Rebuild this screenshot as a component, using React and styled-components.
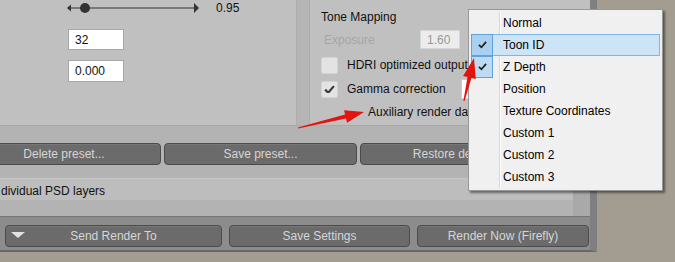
import React from 'react'
import styled, { createGlobalStyle } from 'styled-components'

const GlobalStyle = createGlobalStyle`
  html, body { margin: 0; padding: 0; }
  body {
    background: #a39c90;
    font-family: "Liberation Sans", Arial, sans-serif;
    font-size: 12px;
    overflow: hidden;
  }
`

const Page = styled.div`
  position: relative;
  width: 675px;
  height: 262px;
  overflow: hidden;
  background: #a39c90;
`

const Panel = styled.div`
  box-sizing: border-box;
  width: 597px;
  height: 252px;
  display: flex;
  flex-direction: column;
  background: #b3b3b3;
  border-right: 7px solid #7f7f7f;
  border-bottom: 2px solid #686868;
  overflow: hidden;
`

const TopArea = styled.div`
  display: grid;
  grid-template-columns: 296px 14px 1fr;
  height: 126px;
  flex: none;
  box-sizing: border-box;
  background: #c0c0c0;
  border-bottom: 1px solid #a9a9a9;
`

const LeftCol = styled.div`
  display: flex;
  flex-direction: column;
  align-items: flex-start;
  padding-left: 66px;
  color: #111;
`

const SliderRow = styled.div`
  display: flex;
  align-items: center;
  height: 16px;
`

const SliderValue = styled.span`
  margin-left: 14px;
`

const NumField = styled.div`
  box-sizing: border-box;
  width: 56px;
  height: ${p => p.$h}px;
  margin: ${p => p.$top}px 0 0 2px;
  padding-left: 6px;
  display: flex;
  align-items: center;
  background: #fff;
  border: 1px solid #a8a8a8;
`

const Divider = styled.div`
  background: #b5b5b5;
  border-left: 1px solid #acacac;
  border-right: 1px solid #acacac;
`

const RightCol = styled.div`
  display: flex;
  flex-direction: column;
  padding: 10px 0 0 11px;
  color: #111;
  white-space: nowrap;
  overflow: hidden;
`

const Title = styled.div`
  line-height: 14px;
`

const ExposureRow = styled.div`
  display: flex;
  align-items: center;
  height: 19px;
  margin-top: 6px;
`

const DimLabel = styled.span`
  width: 96px;
  margin-left: 3px;
  color: #a6a6a6;
`

const ExposureField = styled.div`
  box-sizing: border-box;
  width: 40px;
  height: 19px;
  padding-left: 6px;
  display: flex;
  align-items: center;
  background: #ececec;
  border: 1px solid #d6d6d6;
  color: #999;
`

const CheckRow = styled.div`
  display: flex;
  align-items: center;
  height: 18px;
  margin-top: ${p => p.$top}px;
`

const CheckBox = styled.div`
  box-sizing: border-box;
  width: 17px;
  height: 17px;
  margin-right: 9px;
  display: flex;
  align-items: center;
  justify-content: center;
  background: #e3e3e3;
  border: 1px solid #d3d3d3;
  border-radius: 2px;
`

const CheckText = styled.span`
  width: ${p => (p.$w ? `${p.$w}px` : 'auto')};
`

const SelectBox = styled.div`
  box-sizing: border-box;
  width: 40px;
  height: 20px;
  background: #fff;
  border: 1px solid #cfcfcf;
`

const AuxRow = styled.div`
  margin-top: 7px;
  padding-left: 47px;
  line-height: 14px;
`

const Middle = styled.div`
  display: flex;
  flex: 1;
  min-height: 0;
`

const MiddleBody = styled.div`
  flex: 1;
  min-width: 0;
  display: flex;
  flex-direction: column;
  padding-top: 17px;
  overflow: hidden;
`

const Gutter = styled.div`
  width: 17px;
  background: #a9a9a9;
`

const PresetRow = styled.div`
  display: flex;
  gap: 3px;
  margin-left: -33px;
`

const Button = styled.div`
  position: relative;
  box-sizing: border-box;
  flex: none;
  width: ${p => p.$w}px;
  height: 22px;
  display: flex;
  align-items: center;
  justify-content: center;
  background: #6b6b6b;
  border: 1px solid #4b4b4b;
  border-radius: 4px;
  box-shadow: inset 0 1px 0 #777;
  color: #d6d6d6;
  white-space: nowrap;
`

const DropArrow = styled.span`
  position: absolute;
  left: 5px;
  top: 6px;
  width: 0;
  height: 0;
  border-left: 7px solid transparent;
  border-right: 7px solid transparent;
  border-top: 6px solid #e2e2e2;
`

const Band = styled.div`
  box-sizing: border-box;
  height: 22px;
  margin-top: 13px;
  padding: 2px 0 0 1px;
  display: flex;
  align-items: center;
  background: #bdbdbd;
  border-top: 1px solid #c5c5c5;
  color: #111;
  white-space: nowrap;
`

const BottomBar = styled.div`
  box-sizing: border-box;
  height: 34px;
  flex: none;
  display: flex;
  gap: 7px;
  padding: 8px 0 0 5px;
  background: #8c8c8c;
  border-top: 1px solid #767676;
`

const Menu = styled.div`
  position: absolute;
  left: 468px;
  top: 9px;
  width: 195px;
  box-sizing: border-box;
  padding: 2px;
  background: #f0f0f0;
  border: 1px solid #979797;
  box-shadow: 2px 2px 2px rgba(0, 0, 0, 0.45);
  color: #000;
  &::before {
    content: '';
    position: absolute;
    left: 30px;
    top: 2px;
    bottom: 2px;
    width: 1px;
    background: #d7d7d7;
    box-shadow: 1px 0 0 #fff;
  }
`

const Item = styled.div`
  position: relative;
  display: grid;
  grid-template-columns: 22px 1fr;
  align-items: center;
  height: 22px;
  background: ${p => (p.$active ? '#cde4f7' : 'transparent')};
  box-shadow: ${p => (p.$active ? 'inset 0 0 0 1px #7fb6e8' : 'none')};
`

const CheckCell = styled.div`
  box-sizing: border-box;
  height: 22px;
  display: flex;
  align-items: center;
  justify-content: center;
  background: ${p => (p.$on ? (p.$active ? '#a9d0f1' : '#bddcf4') : 'transparent')};
  border: 1px solid ${p => (p.$on ? '#5fa2de' : 'transparent')};
`

const ItemLabel = styled.span`
  padding-left: 10px;
`

const Overlay = styled.svg`
  position: absolute;
  left: 0;
  top: 0;
  pointer-events: none;
`

const Tick = ({ size = 10, color = '#222' }) => (
  <svg width={size} height={size * 0.8} viewBox="0 0 10 8">
    <path d="M1 4.2 L3.8 7 L9 1" fill="none" stroke={color} strokeWidth="2" />
  </svg>
)

function arrowPoints([x1, y1], [x2, y2], headLen, headW, neckW) {
  const len = Math.hypot(x2 - x1, y2 - y1)
  const ux = (x2 - x1) / len
  const uy = (y2 - y1) / len
  const nx = -uy
  const ny = ux
  const bx = x2 - ux * headLen
  const by = y2 - uy * headLen
  const pts = [
    [x1 + nx * 0.6, y1 + ny * 0.6],
    [bx + nx * neckW / 2, by + ny * neckW / 2],
    [bx + nx * headW / 2, by + ny * headW / 2],
    [x2, y2],
    [bx - nx * headW / 2, by - ny * headW / 2],
    [bx - nx * neckW / 2, by - ny * neckW / 2],
    [x1 - nx * 0.6, y1 - ny * 0.6],
  ]
  return pts.map(p => p.map(v => v.toFixed(1)).join(',')).join(' ')
}

const menuItems = [
  { label: 'Normal' },
  { label: 'Toon ID', on: true, active: true },
  { label: 'Z Depth', on: true },
  { label: 'Position' },
  { label: 'Texture Coordinates' },
  { label: 'Custom 1' },
  { label: 'Custom 2' },
  { label: 'Custom 3' },
]

export default function App() {
  return (
    <Page>
      <GlobalStyle />
      <Panel>
        <TopArea>
          <LeftCol>
            <SliderRow>
              <svg width="136" height="16" viewBox="0 0 136 16">
                <polygon points="1,8 5,4.5 5,11.5" fill="#333" />
                <line x1="5" y1="8" x2="128" y2="8" stroke="#333" strokeWidth="1" />
                <circle cx="19" cy="8" r="5" fill="#333" />
                <polygon points="128,3 133,8 128,13" fill="#333" />
              </svg>
              <SliderValue>0.95</SliderValue>
            </SliderRow>
            <NumField $h={21} $top={13}>32</NumField>
            <NumField $h={22} $top={10}>0.000</NumField>
          </LeftCol>
          <Divider />
          <RightCol>
            <Title>Tone Mapping</Title>
            <ExposureRow>
              <DimLabel>Exposure</DimLabel>
              <ExposureField>1.60</ExposureField>
            </ExposureRow>
            <CheckRow $top={7}>
              <CheckBox />
              <CheckText>HDRI optimized output</CheckText>
            </CheckRow>
            <CheckRow $top={6}>
              <CheckBox>
                <Tick size={11} color="#3a3a3a" />
              </CheckBox>
              <CheckText $w={114}>Gamma correction</CheckText>
              <SelectBox />
            </CheckRow>
            <AuxRow>Auxiliary render data</AuxRow>
          </RightCol>
        </TopArea>
        <Middle>
          <MiddleBody>
            <PresetRow>
              <Button $w={194}>Delete preset...</Button>
              <Button $w={193}>Save preset...</Button>
              <Button $w={193}>Restore defaults</Button>
            </PresetRow>
            <Band>dividual PSD layers</Band>
          </MiddleBody>
          <Gutter />
        </Middle>
        <BottomBar>
          <Button $w={217}>
            <DropArrow />
            Send Render To
          </Button>
          <Button $w={181}>Save Settings</Button>
          <Button $w={172}>Render Now (Firefly)</Button>
        </BottomBar>
      </Panel>

      <Menu>
        {menuItems.map(item => (
          <Item key={item.label} $active={item.active}>
            <CheckCell $on={item.on} $active={item.active}>
              {item.on && <Tick size={9} />}
            </CheckCell>
            <ItemLabel>{item.label}</ItemLabel>
          </Item>
        ))}
      </Menu>

      <Overlay width="675" height="262" viewBox="0 0 675 262">
        <polygon points={arrowPoints([298, 128], [364, 112], 19, 13, 4)} fill="#e3140e" />
        <polygon points={arrowPoints([464, 101], [474, 58], 20, 13, 4)} fill="#e3140e" />
      </Overlay>
    </Page>
  )
}
